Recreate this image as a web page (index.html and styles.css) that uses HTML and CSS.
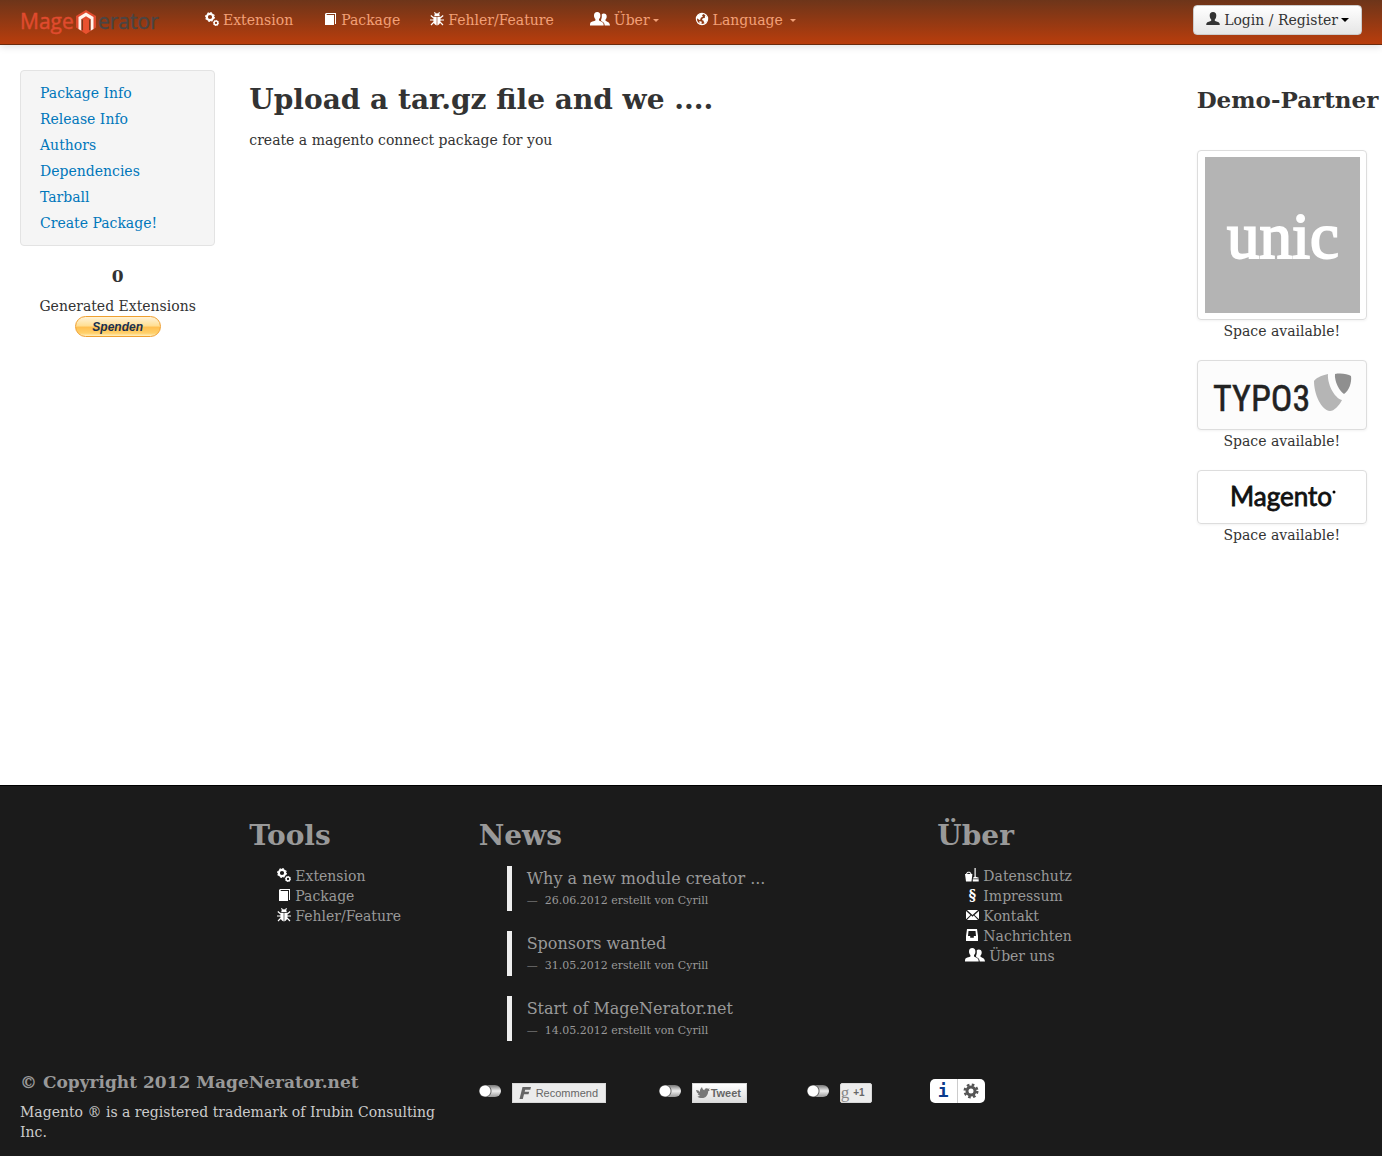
FILE: index.html
```html
<!DOCTYPE html>
<html lang="de">
<head>
<meta charset="utf-8">
<meta name="viewport" content="width=device-width, initial-scale=1">
<title>MageNerator</title>
<link rel="stylesheet" href="styles.css">
</head>
<body>
<svg class="sprite" aria-hidden="true">
  <symbol id="cogs" viewBox="0 0 14 14">
    <circle cx="5" cy="5" r="3.2" fill="none" stroke="currentColor" stroke-width="2.2"/>
    <circle cx="5" cy="5" r="4.5" fill="none" stroke="currentColor" stroke-width="1" stroke-dasharray="1.8 1.7"/>
    <circle cx="11" cy="11" r="1.9" fill="none" stroke="currentColor" stroke-width="1.5"/>
    <circle cx="11" cy="11" r="2.6" fill="none" stroke="currentColor" stroke-width=".8" stroke-dasharray="1 1"/>
  </symbol>
  <symbol id="book" viewBox="0 0 14 14">
    <path fill="currentColor" d="M3 1h10v11h-1V2H4.200l-1 1H11v10H2V2z"/>
  </symbol>
  <symbol id="bug" viewBox="0 0 14 14">
    <path fill="currentColor" d="M4.300 4a2.700 2.700 0 0 1 5.400 0zM3.500 4.800h3.200v8.600C4.600 13 3.400 11 3.400 8.500zM7.300 4.800h3.200v3.700c0 2.500-1.200 4.500-3.200 4.900z"/>
    <path fill="none" stroke="currentColor" stroke-width="1.200" d="M4.500.3l1 1.700M9.500.3L8.500 2M.8 3.500l3 2.500M13.200 3.500l-3 2.500M0 8h4M14 8h-4M1 13l3-3M13 13l-3-3"/>
  </symbol>
  <symbol id="group" viewBox="0 0 20 14">
    <path fill="currentColor" d="M7.200 0c2.100 0 3.200 1.400 3.200 3.400 0 1.700-.6 2.900-1.400 3.700v1.500c1.100.8 4 1.400 4.500 3.200l.2 1.700H0c0-3.100.8-3.400 2.400-4 1.300-.4 2.700-.7 3-1.100V7C4.600 6.200 4 5 4 3.400 4 1.400 5.100 0 7.200 0z"/>
    <path fill="currentColor" d="M13.700 1.500c2 0 3 1.300 3 3.100 0 1.400-.5 2.300-1.200 3v1.200c.9.900 4.200 1 4.500 4.700h-5.300c-.1-2.700-1.600-3.700-3.600-4.500V7.400c.6-1 .9-2.600.6-4.900.5-.7 1.100-1 2-1z"/>
  </symbol>
  <symbol id="globe" viewBox="0 0 14 14">
    <circle cx="7" cy="7" r="5.600" fill="none" stroke="currentColor" stroke-width="1.200"/>
    <path fill="currentColor" d="M2 4.500C3.500 2 6 1.400 8.200 2L7 3.400l1 1.200-2.200 1.200L5 8.200 3 7 1.600 6zM10 3l2.300 2.600v3L10.600 11 9 10.800l-.4-2L7 8l.8-1.800 2-.3zM4.400 9l2.400.8-.4 2.400-2-.9z"/>
  </symbol>
  <symbol id="user" viewBox="0 0 14 14">
    <path fill="currentColor" d="M7 0c2.200 0 3.300 1.500 3.300 3.500 0 1.500-.5 3-1.500 4v1.300c.9.700 4.100.9 4.700 2.500l.3 1.700H.2l.3-1.700c.6-1.600 3.800-1.800 4.700-2.500V7.500c-1-1-1.500-2.500-1.500-4C3.700 1.500 4.800 0 7 0z"/>
  </symbol>
  <symbol id="clean" viewBox="0 0 14 14">
    <path fill="currentColor" fill-rule="evenodd" d="M0 6h1c.5-1.700 1.500-2.300 2.700-2.300S6 4.300 6.500 6h.9l-.9 7.600H1zm2-.1h3.500C5 5 4.500 4.700 3.700 4.700S2.400 5 2 5.900zM9.500 0h1.200v8.800l3 1v.8H8v-.8l1.500-1zM7.800 11.300h5.900v2.300H7.800z"/>
  </symbol>
  <symbol id="mail" viewBox="0 0 14 14">
    <path fill="currentColor" d="M2 2h11L7.500 7zM1 3l4.500 4L1 11.300zM14 3v8.300L9.500 7zM6.200 7.600l1.300 1.100 1.300-1.100L13 12H2z"/>
  </symbol>
  <symbol id="inbox" viewBox="0 0 14 14">
    <path fill="currentColor" fill-rule="evenodd" d="M2 1h10l1 7v5H1V8zM3.500 3L3 8h2.200v1.800h3.600V8H11l-.5-5z"/>
  </symbol>
</svg>

<header class="navbar">
  <a class="brand" href="#" aria-label="MageNerator">
    <svg width="146" height="30" viewBox="0 0 146 30">
      <text class="logo-text" x="0" y="22" fill="#e04b2e" stroke="#e04b2e">Mage</text>
      <path fill="#e04b2e" d="M66 3l10 6v11.500l-3 2-7 4.500-7-4.500-3-2V9z"/>
      <path fill="#fff4ec" d="M66 5.500l7.500 4.500v12l-3 1.700V12L66 9.300 61.500 12v11.700l-3-1.700V10z"/>
      <path fill="#7c3418" d="M61.500 12v11.700l1.600-.9V13zM70.500 12v11.700l-1.600-.9V13z"/>
      <path fill="#e9522f" d="M66 11.500l2.900 1.700V25L66 26.800 63.100 25V13.200z"/>
      <text class="logo-text" x="78" y="22" fill="#4a4543" stroke="#4a4543">erator</text>
    </svg>
  </a>
  <nav>
    <ul class="nav">
      <li><a href="#"><svg class="icon"><use href="#cogs"/></svg>Extension</a></li>
      <li><a href="#"><svg class="icon"><use href="#book"/></svg>Package</a></li>
      <li><a href="#"><svg class="icon"><use href="#bug"/></svg>Fehler/Feature</a></li>
      <li class="dropdown"><a href="#"><svg class="icon wide"><use href="#group"/></svg>Über<span class="caret"></span></a></li>
      <li class="dropdown"><a href="#"><svg class="icon"><use href="#globe"/></svg>Language <span class="caret apart"></span></a></li>
    </ul>
  </nav>
  <button class="login" type="button"><svg class="icon"><use href="#user"/></svg>Login / Register<span class="caret big"></span></button>
</header>

<main class="page grid">
  <aside class="side">
    <ul class="well">
      <li><a href="#">Package Info</a></li>
      <li><a href="#">Release Info</a></li>
      <li><a href="#">Authors</a></li>
      <li><a href="#">Dependencies</a></li>
      <li><a href="#">Tarball</a></li>
      <li><a href="#">Create Package!</a></li>
    </ul>
    <h3 class="count">0</h3>
    <p>Generated Extensions</p>
    <button class="donate" type="button">Spenden</button>
  </aside>
  <section class="content">
    <h1>Upload a tar.gz file and we ....</h1>
    <p>create a magento connect package for you</p>
  </section>
  <aside class="partners">
    <h2>Demo-Partner</h2>
    <figure>
      <a class="thumb" href="#">
        <svg width="156" height="156" viewBox="0 0 156 156">
          <path fill="#b4b4b4" d="M1 0h155v156H1z"/>
          <text class="unic" x="79" y="101" text-anchor="middle">unic</text>
        </svg>
      </a>
      <figcaption>Space available!</figcaption>
    </figure>
    <figure>
      <a class="thumb typo" href="#">
        <svg width="156" height="56" viewBox="0 0 156 56">
          <text class="typo3" x="9" y="44">TYPO3</text>
          <path fill="#b5b5b5" d="M124 7c-8 2-12 4-14 7 0 13 7 29 16 30 4 0 9-5 12-11-8-2-15-17-14-26z"/>
          <path fill="#8f8f8f" d="M131 7c6-1 13 0 16 2 1 6-2 15-7 18-4-2-10-13-9-20z"/>
        </svg>
      </a>
      <figcaption>Space available!</figcaption>
    </figure>
    <figure>
      <a class="thumb" href="#">
        <svg width="156" height="40" viewBox="0 0 156 40">
          <text class="magento" x="77" y="29" text-anchor="middle">Magento</text>
          <circle cx="130" cy="15" r="1.500"/>
        </svg>
      </a>
      <figcaption>Space available!</figcaption>
    </figure>
  </aside>
</main>

<footer class="footer">
  <div class="grid">
    <section class="tools">
      <h1>Tools</h1>
      <ul class="links">
        <li><a href="#"><svg class="icon"><use href="#cogs"/></svg>Extension</a></li>
        <li><a href="#"><svg class="icon"><use href="#book"/></svg>Package</a></li>
        <li><a href="#"><svg class="icon"><use href="#bug"/></svg>Fehler/Feature</a></li>
      </ul>
    </section>
    <section class="news">
      <h1>News</h1>
      <blockquote><a href="#">Why a new module creator ...</a><small>—&nbsp; 26.06.2012 erstellt von Cyrill</small></blockquote>
      <blockquote><a href="#">Sponsors wanted</a><small>—&nbsp; 31.05.2012 erstellt von Cyrill</small></blockquote>
      <blockquote><a href="#">Start of MageNerator.net</a><small>—&nbsp; 14.05.2012 erstellt von Cyrill</small></blockquote>
    </section>
    <section class="about">
      <h1>Über</h1>
      <ul class="links">
        <li><a href="#"><svg class="icon"><use href="#clean"/></svg>Datenschutz</a></li>
        <li><a href="#"><span class="icon section-sign">§</span>Impressum</a></li>
        <li><a href="#"><svg class="icon"><use href="#mail"/></svg>Kontakt</a></li>
        <li><a href="#"><svg class="icon"><use href="#inbox"/></svg>Nachrichten</a></li>
        <li><a href="#"><svg class="icon wide"><use href="#group"/></svg>Über uns</a></li>
      </ul>
    </section>
  </div>
  <div class="grid legal">
    <div class="copyright">
      <h3>© Copyright 2012 MageNerator.net</h3>
      <p>Magento ® is a registered trademark of Irubin Consulting Inc.</p>
    </div>
    <div class="social">
      <div class="share">
        <input class="switch" type="checkbox" id="sw-fb" aria-label="Facebook">
        <label class="badge recommend" for="sw-fb"><svg width="12" height="12" viewBox="0 0 12 12"><path fill="#666" d="M3.500 0H12l-.7 2.700H6.200l-.5 2h4.500l-.7 2.600H5L3.800 12H.5z"/></svg>Recommend</label>
      </div>
      <div class="share">
        <input class="switch" type="checkbox" id="sw-tw" aria-label="Twitter">
        <label class="badge tweet" for="sw-tw"><svg width="14" height="12" viewBox="0 0 14 12"><path fill="#777" d="M0 3c2 .2 3 .8 4 2C3.700 3 4.500 1.500 6 0c.2 1.500 1 2.600 2.300 3.200C8.600 1.700 9.600 1 11 1.200l1 .6 1.800-.3-.9 1.300.9.600-1.600.8C12 8 10 11 6 11c-2 0-3.600-.5-4.600-1.500 1.200 0 2-.2 2.800-.8C3 8.400 2 7.800 1.600 7h1.200C1.300 6 .4 5 0 3z"/></svg>Tweet</label>
      </div>
      <div class="share">
        <input class="switch" type="checkbox" id="sw-g" aria-label="Google">
        <label class="badge plus" for="sw-g"><span class="g">g</span>+1</label>
      </div>
      <div class="settings">
        <a href="#" aria-label="Info">i</a>
        <button type="button" aria-label="Einstellungen"><svg width="16" height="16" viewBox="0 0 16 16"><circle cx="8" cy="8" r="4" fill="none" stroke="#555" stroke-width="3"/><circle cx="8" cy="8" r="6.300" fill="none" stroke="#555" stroke-width="2.400" stroke-dasharray="2.600 2.350"/></svg></button>
      </div>
    </div>
  </div>
</footer>
</body>
</html>
```
FILE: styles.css
```css
* { box-sizing: border-box; }

body {
  margin: 0;
  min-height: 100vh;
  display: flex;
  flex-direction: column;
  background: #fff;
  color: #333;
  font: 14px/20px "DejaVu Serif", serif;
}

h1, h2, h3, p, ul, figure, blockquote { margin: 0; padding: 0; }
ul { list-style: none; }
a { color: #0077bb; text-decoration: none; }
button { font: inherit; cursor: pointer; }
h1 { font-size: 28px; line-height: 40px; margin: 10px 0; white-space: nowrap; }
.sprite { position: absolute; width: 0; height: 0; }

.icon { width: 14px; height: 14px; margin-right: 4px; flex: none; color: #fff; }
.icon.wide { width: 20px; }

.grid {
  display: grid;
  grid-template-columns: repeat(6, minmax(0, 1fr));
  column-gap: 34px;
  padding: 0 20px;
}

/* Top bar */
.navbar {
  display: flex;
  align-items: flex-start;
  height: 45px;
  padding: 0 20px;
  background: linear-gradient(#6d351a, #b93d0c);
  border-bottom: 1px solid #6b2a0c;
  box-shadow: 0 1px 8px rgba(0, 0, 0, .15);
}
.brand { margin-top: 7px; height: 30px; }
.logo-text { font: 21px "Open Sans", sans-serif; stroke-width: .4px; }
.nav { display: flex; margin-left: 24px; }
.nav a {
  display: flex;
  align-items: center;
  padding: 10px 15px;
  color: #f3a077;
}
.nav .icon { margin-bottom: 2px; }
.nav .dropdown { margin-left: 6px; }
.caret {
  border: 3px solid transparent;
  border-top-color: currentColor;
  border-bottom: 0;
  margin-left: 3px;
}
.caret.apart { margin-left: 7px; }
.caret.big { border-width: 4px 4px 0; }
.login {
  display: flex;
  align-items: center;
  margin: 5px 0 0 auto;
  height: 30px;
  padding: 0 12px;
  border: 1px solid #ccc;
  border-radius: 4px;
  background: linear-gradient(#fff, #e6e6e6);
  color: #333;
}
.login .icon { color: #333; margin-bottom: 3px; }
.login .caret { color: #000; }

/* Page body */
.page { padding-top: 25px; padding-bottom: 20px; }
.side { text-align: center; }
.well {
  padding: 9px 0;
  margin-bottom: 20px;
  background: #f5f5f5;
  border: 1px solid #e3e3e3;
  border-radius: 4px;
  text-align: left;
}
.well a { display: block; padding: 3px 19px; }
.count { font-size: 17px; margin-bottom: 10px; }
.donate {
  display: block;
  width: 86px;
  height: 21px;
  margin: 0 auto;
  padding: 0;
  border: 1px solid #f0a030;
  border-radius: 11px;
  background: linear-gradient(#fff3d8, #ffdf95 45%, #ffc052 55%, #ffd06a 85%, #fff0c0);
  color: #19304f;
  font: italic bold 12px/18px "Liberation Sans", sans-serif;
}
.content { grid-column: 2 / 6; }
.partners { margin-right: -5px; padding-left: 30px; }
.partners h2 { font-size: 23px; line-height: 40px; margin: 10px 0 30px; white-space: nowrap; }
.partners figure { margin-bottom: 19px; text-align: center; }
.thumb {
  display: block;
  padding: 6px;
  border: 1px solid #ddd;
  border-radius: 4px;
  box-shadow: 0 1px 3px rgba(0, 0, 0, .055);
  margin-bottom: 1px;
}
.thumb svg { display: block; margin: 0 auto; }
.typo { background: #fcfcfc; }
.unic { font: 65px "Liberation Serif", serif; fill: #fff; stroke: #fff; stroke-width: 2px; }
.typo3 { font: 36px "Roboto Condensed", Roboto, sans-serif; fill: #222; stroke: #222; stroke-width: .5px; }
.magento { font: 26px Lato, sans-serif; fill: #111; stroke: #111; stroke-width: .8px; }

/* Footer */
.footer {
  margin-top: auto;
  padding: 20px 0 14px;
  background: #1b1b1b;
  border-top: 1px solid #000;
  color: #999;
}
.footer a { color: #999; }
.tools { grid-column: 2; }
.news { grid-column: 3 / 5; }
.about { grid-column: 5; }
.links { margin-left: 28px; }
.links a { display: flex; align-items: center; white-space: nowrap; }
.links .icon { margin-bottom: 3px; }
.section-sign { font-weight: bold; font-size: 14px; line-height: 14px; text-align: center; }
blockquote {
  margin: 0 0 20px 28px;
  padding-left: 15px;
  border-left: 5px solid #eee;
}
blockquote a { display: block; font-size: 16px; line-height: 25px; }
blockquote small { display: block; font-size: 11px; line-height: 20px; }
.legal { padding-top: 11px; }
.copyright { grid-column: 1 / 3; }
.copyright h3 { font-size: 17px; margin-bottom: 10px; white-space: nowrap; }
.copyright p { color: #ccc; }
.social {
  grid-column: 3 / 7;
  display: grid;
  grid-template-columns: 180px 148px 123px auto;
  align-items: start;
  padding-top: 7px;
}
.share { display: flex; align-items: center; gap: 11px; padding-top: 4px; }
.switch {
  appearance: none;
  width: 22px;
  height: 12px;
  margin: 0 0 4px;
  border-radius: 6px;
  background:
    radial-gradient(circle at 6px 6px, #fff 5px, #666 6px, transparent 7px),
    linear-gradient(#777, #eee 50%, #999);
}
.badge {
  display: flex;
  align-items: center;
  height: 20px;
  background: #ececec;
  border: 1px solid #d8d8d8;
  color: #666;
  font: 11px/18px "Liberation Sans", sans-serif;
}
.recommend { width: 94px; padding-left: 6px; gap: 5px; }
.tweet { width: 55px; padding-left: 3px; gap: 1px; background: linear-gradient(#fff, #ddd); font-weight: bold; }
.plus { width: 32px; gap: 4px; border-radius: 2px; font-size: 10px; font-weight: bold; }
.g { font: 17px/16px "Liberation Serif", serif; color: #888; }
.settings {
  display: flex;
  width: 55px;
  height: 24px;
  background: #fff;
  border-radius: 5px;
}
.settings a {
  width: 28px;
  border-right: 1px solid #ccc;
  color: #0b3a8c;
  font: bold 18px/24px "DejaVu Sans Mono", monospace;
  text-align: center;
}
.settings button {
  flex: 1;
  display: flex;
  align-items: center;
  justify-content: center;
  padding: 0;
  border: 0;
  background: none;
}
```
